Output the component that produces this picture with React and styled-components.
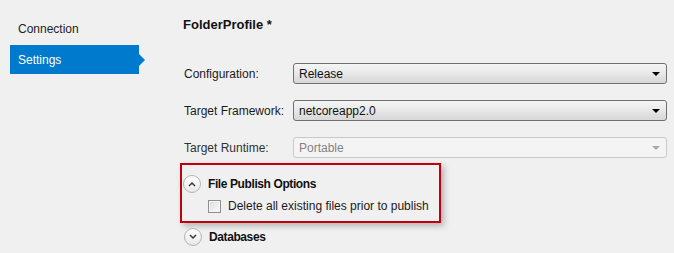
import React from "react";
import styled, { createGlobalStyle } from "styled-components";

const GlobalStyle = createGlobalStyle`
  html, body {
    margin: 0;
    padding: 0;
    background: #f0f0f0;
  }
  body {
    font-family: "Segoe UI", "Liberation Sans", Arial, sans-serif;
    font-size: 12px;
    color: #1b1b1b;
  }
`;

const Page = styled.div`
  display: flex;
  width: 674px;
  height: 253px;
  overflow: hidden;
  background: #f0f0f0;
`;

const Sidebar = styled.div`
  width: 173px;
  flex-shrink: 0;
  padding: 16px 0 0 10px;
  box-sizing: border-box;
`;

const NavItem = styled.div`
  position: relative;
  width: 129px;
  height: 29px;
  display: flex;
  align-items: center;
  padding-left: 8px;
  padding-bottom: ${(p) => (p.active ? "0" : "3px")};
  box-sizing: border-box;
  background: ${(p) => (p.active ? "#007acc" : "transparent")};
  color: ${(p) => (p.active ? "#ffffff" : "#1e1e1e")};

  &::after {
    content: "";
    display: ${(p) => (p.active ? "block" : "none")};
    position: absolute;
    right: -6px;
    top: 50%;
    margin-top: -6px;
    border-top: 6px solid transparent;
    border-bottom: 6px solid transparent;
    border-left: 6px solid #007acc;
  }
`;

const Main = styled.div`
  flex: 1;
  padding: 17px 7px 0 10px;
  box-sizing: border-box;
`;

const Title = styled.div`
  font-weight: bold;
  font-size: 13px;
  color: #111;
  height: 16px;
  line-height: 16px;
  margin-bottom: 30px;
`;

const Form = styled.div`
  display: grid;
  grid-template-columns: 110px 1fr;
  row-gap: 16px;
  align-items: center;
`;

const Label = styled.label`
  padding-left: 1px;
  color: ${(p) => (p.dim ? "#303030" : "#1b1b1b")};
`;

const Combo = styled.div`
  height: 21px;
  box-sizing: border-box;
  display: flex;
  align-items: center;
  justify-content: space-between;
  padding: 0 6px 0 5px;
  border: 1px solid ${(p) => (p.disabled ? "#c9c9c9" : "#707070")};
  border-radius: 3px;
  background: ${(p) =>
    p.disabled
      ? "#f4f4f4"
      : "linear-gradient(to bottom, #f5f5f5 0%, #e8e8e8 50%, #dedede 75%, #d8d8d8 100%)"};
  color: ${(p) => (p.disabled ? "#838383" : "#111")};
`;

const Arrow = styled.span`
  width: 0;
  height: 0;
  border-left: 4px solid transparent;
  border-right: 4px solid transparent;
  border-top: 4px solid ${(p) => (p.disabled ? "#a9a9a9" : "#000")};
`;

const Highlight = styled.div`
  margin: 5px 0 0 -3px;
  width: 261px;
  height: 60px;
  box-sizing: border-box;
  border: 2px solid #c0000c;
  padding: 10px 0 0 1px;
  box-shadow: 3px 3px 6px rgba(0, 0, 0, 0.25);
`;

const ExpanderRow = styled.div`
  display: flex;
  align-items: center;
  gap: 7px;
  height: 18px;
`;

const Circle = styled.span`
  width: 18px;
  height: 18px;
  box-sizing: border-box;
  border-radius: 50%;
  border: 1px solid #b4b4b4;
  background: linear-gradient(to bottom, #ffffff, #e8e8e8);
  display: flex;
  align-items: center;
  justify-content: center;
`;

const SectionTitle = styled.span`
  font-weight: bold;
  font-size: 12px;
  letter-spacing: -0.4px;
  color: #111;
`;

const CheckRow = styled.label`
  display: flex;
  align-items: center;
  gap: 7px;
  line-height: 15px;
  margin: 6px 0 0 25px;
`;

const Box = styled.span`
  width: 13px;
  height: 13px;
  box-sizing: border-box;
  border: 1px solid #8f8f8f;
  background: linear-gradient(135deg, #dcdcdc, #fbfbfb);
  box-shadow: inset 0 0 0 1px #f4f4f4;
`;

const Collapsed = styled(ExpanderRow)`
  margin: 5px 0 0 1px;
`;

function Chevron({ up }) {
  return (
    <svg width="8" height="6" viewBox="0 0 8 6">
      <path
        d={up ? "M1 5 L4 2 L7 5" : "M1 1 L4 4 L7 1"}
        fill="none"
        stroke="#3a3a3a"
        strokeWidth="1.5"
      />
    </svg>
  );
}

export default function App() {
  return (
    <>
      <GlobalStyle />
      <Page>
        <Sidebar>
          <NavItem>Connection</NavItem>
          <NavItem active>Settings</NavItem>
        </Sidebar>
        <Main>
          <Title>FolderProfile *</Title>
          <Form>
            <Label>Configuration:</Label>
            <Combo>
              Release
              <Arrow />
            </Combo>
            <Label>Target Framework:</Label>
            <Combo>
              netcoreapp2.0
              <Arrow />
            </Combo>
            <Label dim>Target Runtime:</Label>
            <Combo disabled>
              Portable
              <Arrow disabled />
            </Combo>
          </Form>
          <Highlight>
            <ExpanderRow>
              <Circle>
                <Chevron up />
              </Circle>
              <SectionTitle>File Publish Options</SectionTitle>
            </ExpanderRow>
            <CheckRow>
              <Box />
              Delete all existing files prior to publish
            </CheckRow>
          </Highlight>
          <Collapsed>
            <Circle>
              <Chevron />
            </Circle>
            <SectionTitle>Databases</SectionTitle>
          </Collapsed>
        </Main>
      </Page>
    </>
  );
}
